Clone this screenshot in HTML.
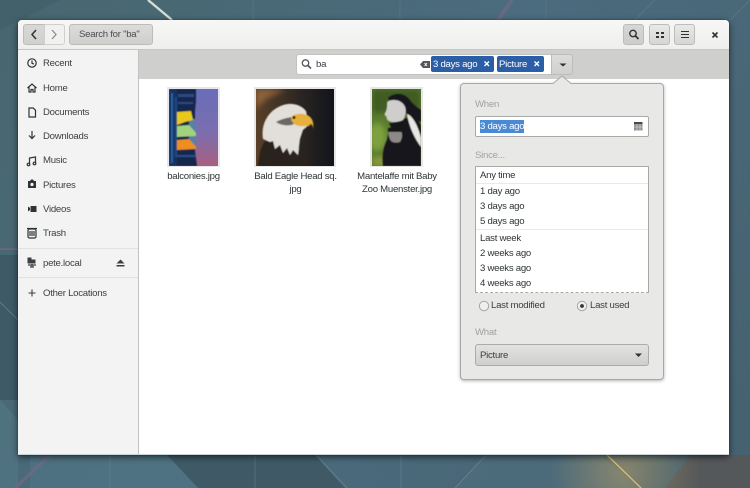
<!DOCTYPE html>
<html><head><meta charset="utf-8"><style>
html,body{margin:0;padding:0;width:750px;height:488px;overflow:hidden;background:#4a6b7a}
body{position:relative;font-family:"Liberation Sans",sans-serif;font-size:9.6px;letter-spacing:-.26px;color:#2e3436}
.a{position:absolute}
.t{position:absolute;white-space:nowrap;line-height:12px;margin-top:1px}
.btn{position:absolute;box-sizing:border-box;border:1px solid #bcbcb8;border-radius:3px;background:linear-gradient(#e9e9e7,#d6d6d3)}
svg{position:absolute;overflow:visible}
.ic{fill:none;stroke:#2e3436;stroke-width:1.2}
.c{position:absolute;text-align:center;line-height:13px;color:#2e3436;margin-top:1px}
</style></head><body>
<svg style="left:0;top:0" width="750" height="488" viewBox="0 0 750 488">
<defs>
<radialGradient id="g" cx="625" cy="472" r="75" gradientUnits="userSpaceOnUse"><stop offset="0" stop-color="#b09a68" stop-opacity=".6"/><stop offset="1" stop-color="#b09a68" stop-opacity="0"/></radialGradient>
<linearGradient id="bgG" x1="0" y1="0" x2="750" y2="488" gradientUnits="userSpaceOnUse"><stop offset="0" stop-color="#47666f"/><stop offset=".5" stop-color="#4b6c7e"/><stop offset="1" stop-color="#46616f"/></linearGradient>
</defs>
<rect width="750" height="488" fill="url(#bgG)"/>
<polygon points="0,0 60,0 0,30" fill="#3f5d68" opacity=".6"/>
<polygon points="0,400 18,420 18,488 0,488" fill="#547885" opacity=".6"/>
<polygon points="0,255 18,255 18,400 0,400" fill="#3e5a66"/>
<polygon points="167,455 198,488 345,488 315,455" fill="#3f5a66"/>
<polygon points="198,488 167,455 30,455 30,488" fill="#507584" opacity=".7"/>
<polygon points="455,488 486,455 600,455 640,488" fill="#527080" opacity=".45"/>
<polygon points="690,455 750,455 750,488 665,488" fill="#55585a"/>
<rect x="540" y="455" width="180" height="33" fill="url(#g)"/>
<line x1="148" y1="0" x2="172" y2="20" stroke="#d5dcd3" stroke-width="2.4"/>
<line x1="0" y1="249" x2="18" y2="249" stroke="#77688a" stroke-width="1.2"/>
<line x1="50" y1="455" x2="15" y2="488" stroke="#74688a" stroke-width="3" opacity=".7"/>
<line x1="498" y1="20" x2="512" y2="0" stroke="#77688a" stroke-width="4" opacity=".6"/>
<line x1="607" y1="455" x2="641" y2="488" stroke="#d8bd7a" stroke-width="1.3"/>
<line x1="316" y1="455" x2="347" y2="488" stroke="#6d7f8b" stroke-width=".9"/>
<line x1="486" y1="455" x2="455" y2="488" stroke="#6d8592" stroke-width=".8"/>
<line x1="110" y1="455" x2="110" y2="488" stroke="#648090" stroke-width=".7"/>
<line x1="255" y1="455" x2="255" y2="488" stroke="#5d7686" stroke-width=".7"/>
<line x1="401" y1="455" x2="401" y2="488" stroke="#648090" stroke-width=".7"/>
<line x1="0" y1="302" x2="18" y2="320" stroke="#648090" stroke-width=".8"/>
<line x1="730" y1="20" x2="750" y2="0" stroke="#5a7888" stroke-width=".8"/>
<line x1="253" y1="0" x2="253" y2="20" stroke="#5a7888" stroke-width=".7"/>
<line x1="400" y1="0" x2="400" y2="20" stroke="#5a7888" stroke-width=".7"/>
<line x1="546" y1="0" x2="546" y2="20" stroke="#5a7888" stroke-width=".7"/>
<line x1="635" y1="20" x2="655" y2="0" stroke="#5a7888" stroke-width=".7"/>
</svg>

<!-- window -->
<div class="a" style="left:18px;top:20px;width:711px;height:435px;background:#fff;border-radius:4px 4px 0 0;box-shadow:0 2px 7px rgba(0,0,0,.6),0 0 1px #1c2a30;overflow:hidden">
  <div class="a" style="left:0;top:0;width:711px;height:29px;background:linear-gradient(#f7f7f6,#efefee);border-bottom:1px solid #c6c6c3"></div>
  <div class="a" style="left:0;top:30px;width:120px;height:405px;background:#f3f3f3;border-right:1px solid #c2c2c0"></div>
  <div class="a" style="left:121px;top:30px;width:590px;height:29px;background:#cfcfcd"></div>
  <div class="a" style="left:0;top:434px;width:711px;height:1px;background:#c9d3da"></div>
</div>

<!-- header buttons -->
<div class="btn" style="left:23px;top:24px;width:22px;height:21px;border-radius:3px 0 0 3px;background:linear-gradient(#d8d8d6,#d0d0ce)"></div>
<div class="btn" style="left:44px;top:24px;width:21px;height:21px;border-radius:0 3px 3px 0;background:#f1f1f0;border-color:#cfcfcd"></div>
<svg style="left:0;top:0" width="100" height="50"><path d="M36 30l-4 4.500 4 4.500" fill="none" stroke="#2e3436" stroke-width="1.500"/><path d="M52 30l4 4.500-4 4.500" fill="none" stroke="#8a8d8e" stroke-width="1.300"/></svg>
<div class="btn" style="left:69px;top:24px;width:84px;height:21px;background:linear-gradient(#dcdcda,#cfcfcd)"></div>
<div class="t" style="left:79px;top:28px;color:#4a4d4f">Search for "ba"</div>

<div class="btn" style="left:623px;top:24px;width:21px;height:21px;background:linear-gradient(#d6d6d4,#cdcdcb)"></div>
<div class="btn" style="left:649px;top:24px;width:21px;height:21px"></div>
<div class="btn" style="left:674px;top:24px;width:21px;height:21px"></div>
<svg style="left:0;top:0" width="750" height="50">
<circle cx="633" cy="33.500" r="3.200" fill="none" stroke="#2e3436" stroke-width="1.400"/><path d="M635.500 36l3 3" stroke="#2e3436" stroke-width="1.800"/>
<path d="M656 32h3v2h-3zM661 32h3v2h-3zM656 36h3v2h-3zM661 36h3v2h-3z" fill="#2e3436"/>
<path d="M681 31.500h8M681 34.500h8M681 37.500h8" stroke="#2e3436" stroke-width="1.100"/>
<path d="M712.500 32.500l5 5M717.500 32.500l-5 5" stroke="#2e3436" stroke-width="1.600"/>
</svg>

<!-- sidebar text -->
<div class="t" style="left:43px;top:57px;color:#3b3f41">Recent</div>
<div class="t" style="left:43px;top:82px;color:#3b3f41">Home</div>
<div class="t" style="left:43px;top:106px;color:#3b3f41">Documents</div>
<div class="t" style="left:43px;top:130px;color:#3b3f41">Downloads</div>
<div class="t" style="left:43px;top:154px;color:#3b3f41">Music</div>
<div class="t" style="left:43px;top:179px;color:#3b3f41">Pictures</div>
<div class="t" style="left:43px;top:203px;color:#3b3f41">Videos</div>
<div class="t" style="left:43px;top:227px;color:#3b3f41">Trash</div>
<div class="t" style="left:43px;top:257px;color:#3b3f41">pete.local</div>
<div class="t" style="left:43px;top:287px;color:#3b3f41">Other Locations</div>
<div class="a" style="left:18px;top:248px;width:120px;height:1px;background:#e2e2e2"></div>
<div class="a" style="left:18px;top:277px;width:120px;height:1px;background:#e2e2e2"></div>
<svg style="left:0;top:0" width="140" height="310">
<circle cx="32" cy="63" r="4.200" class="ic"/><path d="M32 60.500v2.800l2 .8" class="ic" stroke-width="1"/>
<path d="M27.500 88l4.500-4 4.500 4M29 87v5h2v-2.500h2V92h2v-5" class="ic"/>
<path d="M29 108h4.200l2.300 2.300V117H29z" class="ic"/>
<path d="M32 131v7M29 135.500l3 3 3-3" class="ic"/>
<path d="M29.500 164.500v-6.500l6-1v6.500" class="ic"/><circle cx="28.500" cy="164.500" r="1.300" class="ic"/><circle cx="34.500" cy="163.500" r="1.300" class="ic"/>
<path d="M28 181h2l1-1.500h2l1 1.500h2v7h-8z" fill="#2e3436"/><circle cx="32" cy="184.500" r="1.600" fill="#f3f3f3"/>
<path d="M28 206.500v5l2-1.500v-2z" fill="#2e3436"/><rect x="30.500" y="206" width="6" height="6" fill="#2e3436"/>
<rect x="28" y="229" width="8" height="9" rx="1.500" class="ic"/><path d="M27 228.500h10M30 231v5M32 231v5M34 231v5" class="ic" stroke-width=".8"/>
<path d="M27.500 257.500h4v2h4v4h-8z" fill="#3b3f41"/><path d="M28 265h8M30 267h4M32 264v3" stroke="#3b3f41" stroke-width="1.200"/>
<path d="M116.500 263.500l4-4 4 4z" fill="#3b3f41"/><rect x="116.500" y="265" width="8" height="1.500" fill="#3b3f41"/>
<path d="M32 289.500v7M28.500 293h7" stroke="#3b3f41" stroke-width="1.100"/>
</svg>

<!-- thumbnails -->
<svg width="0" height="0" style="left:0;top:0"><defs><filter id="bl" x="-5%" y="-5%" width="110%" height="110%"><feGaussianBlur stdDeviation=".55"/></filter><filter id="bl2" x="-30%" y="-30%" width="160%" height="160%"><feGaussianBlur stdDeviation="3"/></filter>
<clipPath id="cb"><rect width="49" height="77"/></clipPath><clipPath id="ce"><rect width="78" height="77"/></clipPath></defs></svg>
<div class="a" style="left:167px;top:87px;width:53px;height:80px;background:#e6e6ec;border-radius:1px"></div>
<svg style="left:169px;top:89px" width="49" height="77" viewBox="0 0 49 77">
<defs><linearGradient id="sky" x1="0" y1="0" x2="0" y2="1"><stop offset="0" stop-color="#6a6db8"/><stop offset=".55" stop-color="#7a6eb0"/><stop offset="1" stop-color="#a8607f"/></linearGradient></defs>
<g clip-path="url(#cb)"><rect width="49" height="77" fill="url(#sky)"/>
<g filter="url(#bl)">
<polygon points="0,0 27,0 27,12 26,22 26,62 28,77 0,77" fill="#14264e"/>
<rect x="9" y="5" width="16" height="3" fill="#2c4a80"/>
<rect x="9" y="13" width="15" height="2" fill="#2c4a80"/>
<rect width="8" height="77" fill="#13315f"/>
<rect x="2" y="4" width="2" height="70" fill="#2a6ab0" opacity=".8"/>
<rect x="6" y="8" width="2" height="60" fill="#2a6ab0" opacity=".5"/>
<rect x="20" y="30" width="7" height="28" fill="#5a80a6"/>
<polygon points="8,23 22,22 24,31 16,33 8,36" fill="#e8c81e"/>
<polygon points="8,37 20,36 27,44 27,47 8,48" fill="#a2d27e"/>
<polygon points="8,51 20,50 27,58 27,60 8,61" fill="#ee8d24"/>
<rect x="8" y="66" width="19" height="2" fill="#264f85"/>
</g></g>
</svg>

<div class="a" style="left:254px;top:87px;width:82px;height:80px;background:#e6e6e4"></div>
<svg style="left:256px;top:89px" width="78" height="77" viewBox="0 0 78 77">
<defs>
<linearGradient id="eb" x1="0" y1="0" x2="1" y2="0"><stop offset="0" stop-color="#5a4028"/><stop offset=".55" stop-color="#2c2622"/><stop offset="1" stop-color="#10141b"/></linearGradient>
</defs>
<g clip-path="url(#ce)"><rect width="78" height="77" fill="url(#eb)"/>
<polygon points="0,0 30,0 10,10 0,20" fill="#b47a4c" opacity=".6" filter="url(#bl2)"/>
<g filter="url(#bl)">
<path d="M2 77C3 62 7 52 14 47L46 60C50 66 52 72 52 77z" fill="#2a231f"/>
<path d="M7 50C4 32 16 17 32 15c8-.5 14 2 18 7l3 14-6 5-3 9-2 16-5-5-3 5-3-7-4 5-3-8-5 4-2-8-3 1z" fill="#e2dfda"/>
<path d="M20 33c5-3 13-5 19-5l3 4-6 4c-6 1-12 0-16-3z" fill="#6a6764"/>
<path d="M36 27c5-3 12-3 17 0 4 3 5 8 4 13-1-2-3-3-5-3-3 0-10 1-14-2l-3-4z" fill="#e6b03a"/>
<path d="M54 35c3 0 3.500 3 3 6-1-2-2-3-4-4z" fill="#33281a"/>
<circle cx="38" cy="28.500" r="1.500" fill="#1c1712"/>
</g></g>
</svg>

<div class="a" style="left:370px;top:87px;width:53px;height:80px;background:#e6e6e4"></div>
<svg style="left:372px;top:89px" width="49" height="77" viewBox="0 0 49 77">
<g clip-path="url(#cb)">
<rect width="49" height="77" fill="#5a7c30"/>
<rect x="0" y="0" width="49" height="24" fill="#3f5c22" filter="url(#bl2)"/>
<ellipse cx="5" cy="48" rx="9" ry="14" fill="#7fa03e" filter="url(#bl2)"/>
<rect x="0" y="68" width="49" height="9" fill="#8a9a3a" filter="url(#bl2)"/>
<g filter="url(#bl)">
<path d="M11 77c-1-10 0-18 4-26 1-6 3-14 8-20l22-4 4 10v40z" fill="#17171a"/>
<path d="M16 9c5-5 15-6 21 1 3 4 7 8 12 11v12l-14-8-14-8z" fill="#19191c"/>
<path d="M15 13c4-3 13-3 17 3 3 4 2 11-1 15-4 2-10 3-14 1-2-1-3-3-2-4-2-1-3-3-2-4 2-3 2-7 2-11z" fill="#cfcecc"/>
<path d="M35 25c6 2 11 12 14 24v9C43 50 37 38 35 25z" fill="#e6e6e6"/>
<path d="M17 34h14l-2 4H19z" fill="#131315"/>
<path d="M17 42c3-2 9-2 12 0 2 3 1 8-1 11-3 1-7 1-9-1-2-3-3-7-2-10z" fill="#8d8986"/>
<path d="M16 39h14v4H16z" fill="#141416"/>
</g></g>
</svg>

<div class="c" style="left:150px;top:169px;width:87px">balconies.jpg</div>
<div class="c" style="left:247px;top:169px;width:97px">Bald Eagle Head sq.<br>jpg</div>
<div class="c" style="left:347px;top:169px;width:100px">Mantelaffe mit Baby<br>Zoo Muenster.jpg</div>

<!-- search bar -->
<div class="a" style="left:296px;top:54px;width:256px;height:21px;box-sizing:border-box;background:#fff;border:1px solid #c2c2c0;border-radius:3px 0 0 3px"></div>
<div class="btn" style="left:551px;top:54px;width:22px;height:21px;border-radius:0 3px 3px 0;background:linear-gradient(#dcdcda,#d0d0ce)"></div>
<svg style="left:0;top:0" width="600" height="90">
<circle cx="305.500" cy="63" r="3.200" fill="none" stroke="#55585a" stroke-width="1.300"/><path d="M308 65.500l3 3" stroke="#55585a" stroke-width="1.600"/>
<path d="M420 64.500l3-3.500h7v7h-7z" fill="#55585a"/><path d="M424.500 63l2.500 3M427 63l-2.500 3" stroke="#fff" stroke-width=".9"/>
<path d="M559.500 63.500h7l-3.500 3z" fill="#2e3436"/>
</svg>
<div class="t" style="left:316px;top:58px;color:#3b3f41">ba</div>
<div class="a" style="left:431px;top:56px;width:63px;height:16px;background:#2a5ea6;border-radius:2px"></div>
<div class="a" style="left:497px;top:56px;width:47px;height:16px;background:#2a5ea6;border-radius:2px"></div>
<div class="t" style="left:433px;top:58px;color:#fff">3 days ago</div>
<div class="t" style="left:499px;top:58px;color:#fff">Picture</div>
<svg style="left:0;top:0" width="600" height="90">
<path d="M484.500 61.500l4.500 4.500M489 61.500l-4.500 4.500M534.500 61.500l4.500 4.500M539 61.500l-4.500 4.500" stroke="#fff" stroke-width="1.400"/>
</svg>

<!-- popover -->
<div class="a" style="left:460px;top:83px;width:204px;height:297px;box-sizing:border-box;background:#e8e8e7;border:1px solid #a8a8a6;border-radius:4px;box-shadow:0 1px 3px rgba(0,0,0,.3)"></div>
<svg style="left:0;top:0" width="600" height="90"><path d="M553 84l9-8 9 8z" fill="#e8e8e7"/><path d="M553 83.500l9-7.500 9 7.500" fill="none" stroke="#a8a8a6"/></svg>
<div class="t" style="left:475px;top:98px;color:#a0a2a2">When</div>
<div class="a" style="left:475px;top:116px;width:174px;height:21px;box-sizing:border-box;background:#fff;border:1px solid #a9a9a7;border-radius:2px"></div>
<div class="a" style="left:480px;top:120px;width:44px;height:13px;background:#4a8ad4"></div>
<div class="t" style="left:480px;top:120px;color:#fff">3 days ago</div>
<svg style="left:0;top:0" width="660" height="140"><rect x="634" y="122" width="8.500" height="8.500" fill="#8c8f8f"/><rect x="634" y="122" width="8.500" height="2" fill="#45494a"/><path d="M637 124v6.500M640 124v6.500M634 127h8.500" stroke="#e2e2e2" stroke-width=".6"/></svg>

<div class="t" style="left:475px;top:149px;color:#a0a2a2">Since...</div>
<div class="a" style="left:475px;top:166px;width:174px;height:127px;box-sizing:border-box;background:#fff;border:1px solid #a9a9a7;border-bottom:1px dashed #a9a9a7"></div>
<div class="a" style="left:476px;top:183px;width:172px;height:1px;background:#eaeaea"></div>
<div class="a" style="left:476px;top:229px;width:172px;height:1px;background:#eaeaea"></div>
<div class="t" style="left:480px;top:169px">Any time</div>
<div class="t" style="left:480px;top:185px">1 day ago</div>
<div class="t" style="left:480px;top:200px">3 days ago</div>
<div class="t" style="left:480px;top:215px">5 days ago</div>
<div class="t" style="left:480px;top:232px">Last week</div>
<div class="t" style="left:480px;top:247px">2 weeks ago</div>
<div class="t" style="left:480px;top:262px">3 weeks ago</div>
<div class="t" style="left:480px;top:277px">4 weeks ago</div>

<svg style="left:0;top:0" width="660" height="320">
<circle cx="484" cy="306" r="4.700" fill="#efefee" stroke="#a5a5a3"/>
<circle cx="582" cy="306" r="4.700" fill="#efefee" stroke="#a5a5a3"/><circle cx="582" cy="306" r="1.900" fill="#2e3436"/>
</svg>
<div class="t" style="left:491px;top:299px;color:#3b3f41">Last modified</div>
<div class="t" style="left:590px;top:299px;color:#3b3f41">Last used</div>
<div class="t" style="left:475px;top:326px;color:#a0a2a2">What</div>
<div class="btn" style="left:475px;top:344px;width:174px;height:22px;background:linear-gradient(#e2e2e0,#cfcfcd);border-color:#ababa9"></div>
<div class="t" style="left:480px;top:349px;color:#3b3f41">Picture</div>
<svg style="left:0;top:0" width="660" height="370"><path d="M635 353.500h7l-3.500 3.500z" fill="#2e3436"/></svg>
</body></html>
